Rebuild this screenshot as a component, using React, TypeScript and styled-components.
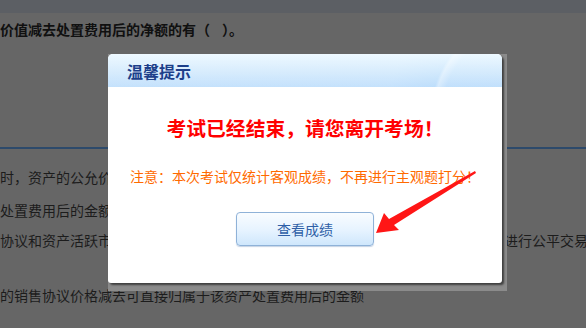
import React from 'react'
import styled, { createGlobalStyle } from 'styled-components'

const GlobalStyle = createGlobalStyle`
  html, body {
    margin: 0;
    padding: 0;
    background: #666666;
  }
  body {
    font-family: "Noto Sans CJK SC", "Noto Sans", sans-serif;
  }
`

const Page = styled.div`
  position: relative;
  width: 586px;
  height: 328px;
  overflow: hidden;
  background: #666666;
  color: #1c1c1c;
  font-size: 14px;
`

const TopStrip = styled.div`
  height: 13px;
  background: #5c5f64;
`

const Question = styled.div`
  margin-top: 6px;
  line-height: 20px;
  font-weight: bold;
  color: #101010;
  white-space: nowrap;
`

const Blank = styled.span`
  display: inline-block;
  width: 12px;
`

const Divider = styled.div`
  margin-top: 108px;
  height: 2px;
  background: #2d4a6b;
`

const Line = styled.div<{ $mt: number }>`
  margin-top: ${(p) => p.$mt}px;
  line-height: 20px;
  white-space: nowrap;
  overflow: hidden;
`

const Frame = styled.div`
  position: absolute;
  left: 108px;
  top: 54px;
  width: 399px;
  height: 237px;
  background: #8b8b8b;
`

const Dialog = styled.div`
  width: 394px;
  height: 229px;
  background: #ffffff;
  border-radius: 5px 5px 3px 3px;
  box-shadow: 2px 2px 2px rgba(0, 0, 0, 0.55);
  display: flex;
  flex-direction: column;
  overflow: hidden;
`

const TitleBar = styled.div`
  height: 33px;
  flex: none;
  display: flex;
  align-items: center;
  padding-left: 19px;
  background:
    radial-gradient(circle at 420px 60px, rgba(255, 255, 255, 0.18) 86px, rgba(255, 255, 255, 0.45) 94px, rgba(255, 255, 255, 0.12) 97px, rgba(255, 255, 255, 0.22) 140px),
    linear-gradient(#e9f7ff, #b4d9fb);
`

const Title = styled.span`
  font-size: 16px;
  font-weight: bold;
  color: #1d3f8a;
`

const Body = styled.div`
  flex: 1;
  display: flex;
  flex-direction: column;
  align-items: center;
  padding-top: 29px;
`

const Heading = styled.div`
  font-size: 19.8px;
  line-height: 24px;
  font-weight: bold;
  color: #ff0000;
  white-space: nowrap;
`

const Notice = styled.div`
  margin-top: 26px;
  font-size: 14px;
  line-height: 20px;
  color: #ff6a00;
  white-space: nowrap;
`

const ScoreButton = styled.button`
  margin-top: 26px;
  width: 138px;
  height: 34px;
  border: 1px solid #8fb2d8;
  border-radius: 4px;
  background: linear-gradient(#f9fcff, #e6f3ff 55%, #cfe7fc);
  box-shadow: 0 1px 1px rgba(90, 130, 180, 0.35);
  color: #2f5fa7;
  font-family: "Noto Sans CJK SC", "Noto Sans", sans-serif;
  font-size: 14px;
  cursor: pointer;
`

const Arrow = styled.svg`
  position: absolute;
  left: 0;
  top: 0;
  width: 586px;
  height: 328px;
  pointer-events: none;
`

export default function App() {
  return (
    <>
      <GlobalStyle />
      <Page>
        <TopStrip />
        <Question>
          价值减去处置费用后的净额的有（<Blank />）。
        </Question>
        <Divider />
        <Line $mt={18}>时，资产的公允价值减去处置费用后的净额应当根据公平交易中销售协议价格减去</Line>
        <Line $mt={13}>处置费用后的金额确定</Line>
        <Line $mt={10}>协议和资产活跃市场，但能够获取资产的最佳信息估计资产处置价格的应当在熟悉进行公平交易的价格</Line>
        <Line $mt={35}>的销售协议价格减去可直接归属于该资产处置费用后的金额</Line>

        <Frame>
          <Dialog>
            <TitleBar>
              <Title>温馨提示</Title>
            </TitleBar>
            <Body>
              <Heading>考试已经结束，请您离开考场！</Heading>
              <Notice>注意：本次考试仅统计客观成绩，不再进行主观题打分！</Notice>
              <ScoreButton>查看成绩</ScoreButton>
            </Body>
          </Dialog>
        </Frame>

        <Arrow viewBox="0 0 586 328">
          <polygon
            points="376,233 384,213 389,219 475,171 476,173 394,225 399,230"
            fill="#ff1616"
          />
        </Arrow>
      </Page>
    </>
  )
}
